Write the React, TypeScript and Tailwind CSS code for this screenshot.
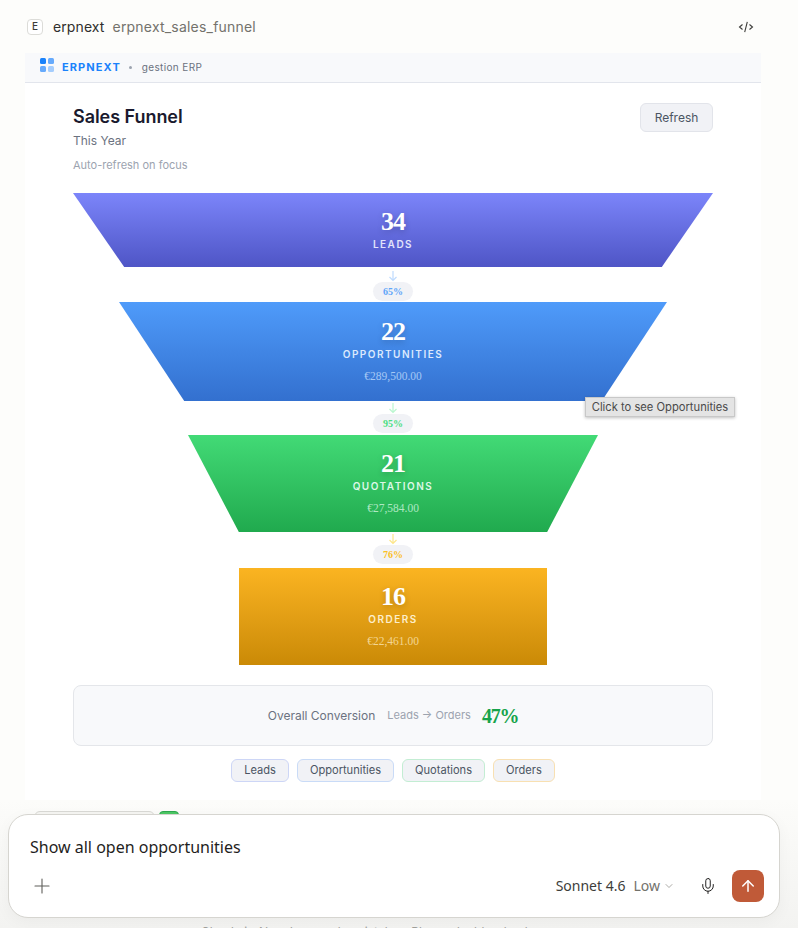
import { ArrowUp, ChevronDown, Mic, Plus } from 'lucide-react'

const sans = 'font-["Inter",sans-serif]'
const serif = 'font-["Liberation_Serif",serif]'

const stages = [
  {
    count: '34',
    label: 'LEADS',
    shape: 'w-[640px] h-[74px] pt-[15px] [clip-path:polygon(0_0,100%_0,92%_100%,8%_100%)] bg-gradient-to-b from-[#7c85fa] to-[#4f55c6]',
    labelColor: 'text-[#e2e3fb]',
  },
  {
    count: '22',
    label: 'OPPORTUNITIES',
    amount: '€289,500.00',
    shape: 'w-[548px] h-[99px] pt-[16px] [clip-path:polygon(0_0,100%_0,88.1%_100%,11.9%_100%)] bg-gradient-to-b from-[#4f9bfa] to-[#3370cf]',
    labelColor: 'text-[#dbe9fd]',
    amountColor: 'text-[#a5c8f5]',
  },
  {
    count: '21',
    label: 'QUOTATIONS',
    amount: '€27,584.00',
    shape: 'w-[410px] h-[97px] pt-[15px] [clip-path:polygon(0_0,100%_0,87.6%_100%,12.4%_100%)] bg-gradient-to-b from-[#42da76] to-[#20aa4e]',
    labelColor: 'text-[#dcf8e6]',
    amountColor: 'text-[#aee8c3]',
  },
  {
    count: '16',
    label: 'ORDERS',
    amount: '€22,461.00',
    shape: 'w-[308px] h-[97px] pt-[15px] bg-gradient-to-b from-[#fbb421] to-[#ca8a06]',
    labelColor: 'text-[#fdeecb]',
    amountColor: 'text-[#f3d591]',
  },
]

const rates = [
  { value: '65%', arrow: 'text-[#bfdbfe]', text: 'text-[#60a5fa]', box: 'h-[35px]' },
  { value: '95%', arrow: 'text-[#bbf7d0]', text: 'text-[#4ade80]', box: 'h-[34px]' },
  { value: '76%', arrow: 'text-[#fde68a]', text: 'text-[#fbbf24]', box: 'h-[36px]' },
]

const chips = [
  { name: 'Leads', border: 'border-[#cdd6f6]' },
  { name: 'Opportunities', border: 'border-[#c9dbf7]' },
  { name: 'Quotations', border: 'border-[#c3edd3]' },
  { name: 'Orders', border: 'border-[#f8e0b2]' },
]

function DownArrow({ className }: { className: string }) {
  return (
    <svg width="12" height="12" viewBox="0 0 12 12" fill="none" stroke="currentColor" strokeWidth="1.2" className={className}>
      <path d="M6 1v9.5M2.5 7 6 10.5 9.5 7" />
    </svg>
  )
}

export default function App() {
  return (
    <div className={`relative h-[928px] w-[798px] overflow-hidden bg-[#fdfdfb] ${sans}`}>
      {/* Artifact title */}
      <div className="flex h-[53px] items-center pl-[27px] pr-[44px]">
        <div className="flex h-[16px] w-[16px] items-center justify-center rounded-[4px] border border-[#dcdcd8] bg-white text-[10px] font-medium text-[#3d3d3a]">
          E
        </div>
        <span className="ml-[10px] text-[14px] tracking-[0.1px] text-[#2f2f2d]">erpnext</span>
        <span className="ml-[8px] text-[14px] tracking-[0.2px] text-[#73726c]">erpnext_sales_funnel</span>
        <svg width="16" height="14" viewBox="0 0 16 14" fill="none" stroke="#3d3d3a" strokeWidth="1.1" className="ml-auto">
          <path d="M4.5 4.5 1.5 7l3 2.5M11.5 4.5l3 2.5-3 2.5M9.3 1.8 6.7 12.2" />
        </svg>
      </div>

      {/* Artifact card */}
      <div className="ml-[25px] h-[747px] w-[736px] bg-white">
        <div className="flex h-[30px] items-center border-b border-[#e2e5ec] bg-[#f8f9fb] pl-[15px]">
          <div className="mb-[5px] grid grid-cols-2 gap-[2px]">
            <span className="h-[6px] w-[6px] rounded-[1.5px] bg-[#1a82fb]" />
            <span className="h-[6px] w-[6px] rounded-[1.5px] bg-[#66aafc]" />
            <span className="h-[6px] w-[6px] rounded-[1.5px] bg-[#66aafc]" />
            <span className="h-[6px] w-[6px] rounded-[1.5px] bg-[#a5cdfd]" />
          </div>
          <span className="ml-[8px] text-[11px] font-bold tracking-[1.1px] text-[#1a82fb]">ERPNEXT</span>
          <span className="ml-[8px] h-[3px] w-[3px] rounded-full bg-[#9ca3af]" />
          <span className="ml-[10px] text-[10px] tracking-[0.35px] text-[#6b7280]">gestion ERP</span>
        </div>

        <div className="px-[48px]">
          <div className="flex items-start justify-between pt-[20px]">
            <div>
              <h1 className="text-[18px] leading-[28px] font-semibold tracking-[-0.05px] text-[#1a1a2e]">Sales Funnel</h1>
              <p className="mt-[2px] text-[12px] leading-[16px] text-[#6b7280]">This Year</p>
              <p className="mt-[8px] text-[11px] leading-[16px] text-[#9ca3af]">Auto-refresh on focus</p>
            </div>
            <button className="h-[29px] w-[73px] rounded-[6px] border border-[#e2e4ea] bg-[#f1f2f6] text-[12px] text-[#4b5563]">
              Refresh
            </button>
          </div>

          {/* Funnel */}
          <div className="mt-[20px] flex flex-col items-center">
            {stages.map((stage, i) => (
              <div key={stage.label} className="flex flex-col items-center">
                <div className={`flex flex-col items-center ${stage.shape}`}>
                  <span className={`${serif} text-[26px] leading-[28px] font-bold tracking-[-1px] text-white [text-shadow:0_2px_6px_rgba(0,0,0,0.2)]`}>
                    {stage.count}
                  </span>
                  <span className={`text-[10px] leading-[16px] font-semibold tracking-[1.5px] ${stage.labelColor}`}>
                    {stage.label}
                  </span>
                  {stage.amount && (
                    <span className={`${serif} mt-[6px] text-[11.5px] leading-[16px] ${stage.amountColor}`}>{stage.amount}</span>
                  )}
                </div>
                {rates[i] && (
                  <div className={`flex flex-col items-center ${rates[i].box} ${i === 0 ? 'pt-[3px]' : 'pt-[1px]'}`}>
                    <DownArrow className={rates[i].arrow} />
                    <span className={`${serif} flex h-[19px] w-[40px] items-center justify-center rounded-full bg-[#f1f2f6] text-[10px] font-bold ${rates[i].text}`}>
                      {rates[i].value}
                    </span>
                  </div>
                )}
              </div>
            ))}
          </div>

          {/* Overall conversion */}
          <div className="mt-[20px] flex h-[61px] items-center justify-center rounded-[8px] border border-[#e4e6ea] bg-[#f8f9fb]">
            <span className="text-[12px] text-[#6b7280]">Overall Conversion</span>
            <span className="ml-[12px] text-[11px] text-[#9ca3af]">Leads → Orders</span>
            <span className={`${serif} ml-[11px] text-[20px] font-bold tracking-[-1.2px] text-[#16a34a]`}>47%</span>
          </div>

          <div className="mt-[13px] flex justify-center gap-[8px]">
            {chips.map(chip => (
              <button key={chip.name} className={`h-[23px] rounded-[6px] border ${chip.border} bg-[#f1f2f6] px-[12px] text-[11.1px] text-[#4b5563]`}>
                {chip.name}
              </button>
            ))}
          </div>
        </div>
      </div>

      {/* Fade under the input */}
      <div className="absolute left-0 right-0 top-[800px] h-[128px] bg-gradient-to-b from-[#fcfcfa] to-[#f3f3f1]" />

      {/* Content scrolled under the input */}
      <div className="absolute left-[34px] top-[811px] h-[8px] w-[121px] rounded-t-[6px] border border-[#d9d9d5] bg-[#f5f5f2]" />
      <div className="absolute left-[159px] top-[811px] h-[8px] w-[20px] rounded-t-[4px] border border-[#2fa84f] bg-[#4cc764]" />
      <p className="absolute left-0 right-0 top-[924px] text-center text-[12px] leading-[16px] text-[#a0a09b]">
        Claude is AI and can make mistakes. Please double-check responses.
      </p>

      {/* Chat input */}
      <div className="absolute left-[8px] top-[814px] h-[104px] w-[772px] rounded-[20px] border border-[#d6d5d0] bg-white shadow-[0_4px_16px_rgba(0,0,0,0.04)]">
        <p className='pl-[21px] pt-[21px] font-["Noto_Sans",sans-serif] text-[16px] leading-[22px] text-[#1f1e1d]'>Show all open opportunities</p>
        <div className='absolute bottom-[15px] left-[21px] right-[15px] flex items-center font-["Noto_Sans",sans-serif]'>
          <Plus size={24} strokeWidth={1.1} className="text-[#5f5e5a]" />
          <span className="mb-[2px] ml-auto text-[14px] text-[#3d3d3a]">Sonnet 4.6</span>
          <span className="mb-[2px] ml-[8px] text-[14px] text-[#73726c]">Low</span>
          <ChevronDown size={12} strokeWidth={1.2} className="ml-[3px] text-[#73726c]" />
          <Mic size={18} strokeWidth={1.3} className="ml-[24px] text-[#1f1e1d]" />
          <div className="ml-[15px] flex h-[32px] w-[32px] items-center justify-center rounded-[8px] bg-[#c05a38]">
            <ArrowUp size={18} strokeWidth={2} className="text-white" />
          </div>
        </div>
      </div>

      {/* Tooltip */}
      <div className="absolute left-[585px] top-[397px] flex h-[20px] w-[150px] items-center justify-center border border-[#c8c8c8] bg-[#e4e4e4] text-[11.2px] text-[#4a4a4a] shadow-[0_1px_3px_rgba(0,0,0,0.25)]">
        Click to see Opportunities
      </div>
    </div>
  )
}
